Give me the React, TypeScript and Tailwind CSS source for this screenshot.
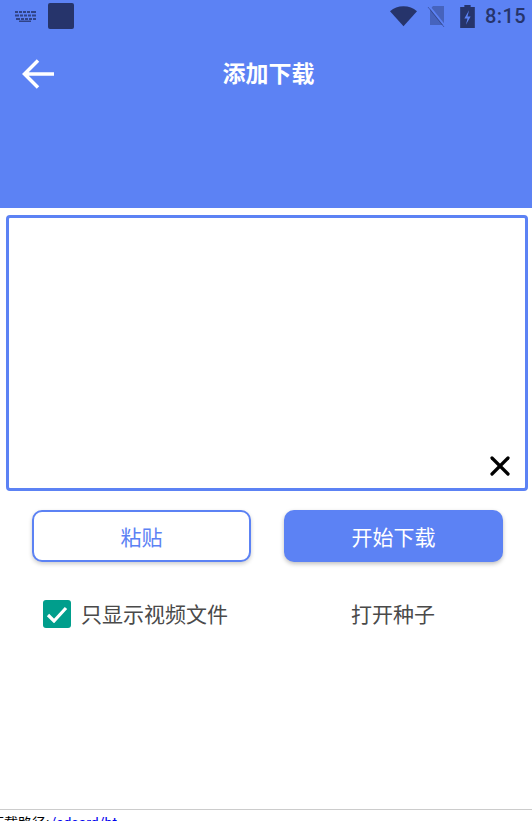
import { X } from "lucide-react";

const cjk = "font-['Roboto','Noto_Sans_CJK_SC',sans-serif]";

function StatusBar() {
  return (
    <div className="flex h-[32px] items-center justify-between pl-[15px] pr-[6px]">
      <div className="flex items-center gap-[12px]">
        <svg width="21" height="11" viewBox="0 0 21 11" fill="#26346b" opacity="0.8">
          <path d="M0 0h3v2H0zM4 0h3v2H4zM8 0h3v2H8zM12 0h3v2h-3zM16 0h5v2h-5zM0 3.500h4v2H0zM5 3.500h3v2H5zM9 3.500h3v2H9zM13 3.500h3v2h-3zM17 3.500h4v2h-4zM1 7h4v2H1zM6 7h3v2H6zM10 7h3v2h-3zM14 7h3v2h-3zM18 7h3v2h-3zM4 9.500h12V11H4z" />
        </svg>
        <div className="h-[26px] w-[26px] rounded-[2px] bg-[#26346b]" />
      </div>
      <div className="flex items-center">
        <svg width="27" height="22" viewBox="0 0 28 22" fill="#26346b">
          <path d="M0 6C4 2.500 8.500 1 14 1s10 1.500 14 5L14 21.500z" />
        </svg>
        <svg className="ml-[10px]" width="20" height="22" viewBox="0 0 20 22" fill="none">
          <path d="M6 1h11v19H3V4.500z" fill="#26346b" opacity="0.4" />
          <path d="M2 1l16 20" stroke="#5c82f4" strokeWidth="2" />
          <path d="M1 2l16 20" stroke="#26346b" strokeWidth="1" opacity="0.5" />
        </svg>
        <svg className="ml-[13px]" width="15" height="23" viewBox="0 0 14 22" fill="#26346b">
          <path fillRule="evenodd" d="M4 0h6v2h4v20H0V2h4zM8.500 5L4 13h3l-1.500 6L10 11H7z" />
        </svg>
        <span className={`ml-[10px] text-[20px] font-medium leading-none tracking-[0.4px] text-[#26346b] ${cjk}`}>8:15</span>
      </div>
    </div>
  );
}

export default function App() {
  return (
    <div className={`flex h-[821px] w-[532px] flex-col overflow-hidden bg-white ${cjk}`}>
      <div className="h-[208px] shrink-0 bg-[#5c82f4]">
        <StatusBar />
        <div className="relative mt-[12px] flex h-[60px] items-center justify-center">
          <svg className="absolute left-[22px] top-[15px]" width="32" height="30" viewBox="0 0 32 30" fill="none">
            <path d="M32 15H3M16 1.500L2.500 15 16 28.500" stroke="white" strokeWidth="3.500" />
          </svg>
          <h1 className="mr-[-5px] pt-[2px] text-[23px] font-bold text-white">添加下载</h1>
        </div>
      </div>

      <div className="relative ml-[6px] mr-[4px] mt-[7px] h-[276px] shrink-0 rounded-[4px] border-[3px] border-[#5c82f4]">
        <X className="absolute bottom-[6px] right-[9px]" size={32} color="black" strokeWidth={2.4} />
      </div>

      <div className="mt-[19px] flex h-[52px] shrink-0 pl-[32px]">
        <button className="w-[219px] rounded-[10px] border-2 border-[#5c82f4] bg-white pt-[5px] text-[21px] text-[#5c82f4] shadow-[0_2px_4px_rgba(0,0,0,0.2)]">粘贴</button>
        <button className="ml-[33px] w-[219px] rounded-[10px] bg-[#5c82f4] pt-[5px] text-[21px] text-white shadow-[0_2px_4px_rgba(0,0,0,0.25)]">开始下载</button>
      </div>

      <div className="mt-[38px] flex h-[28px] shrink-0 items-center text-[21px] text-[#4a4a4a]">
        <div className="ml-[43px] flex h-[28px] w-[28px] items-center justify-center rounded-[3px] bg-[#009e8c]">
          <svg width="22" height="17" viewBox="0 0 22 17" fill="none">
            <path d="M2 9l6 6L20 2" stroke="white" strokeWidth="3.200" />
          </svg>
        </div>
        <span className="ml-[10px] w-[147px] whitespace-nowrap pt-[3px]">只显示视频文件</span>
        <span className="ml-[123px] whitespace-nowrap pt-[3px]">打开种子</span>
      </div>

      <div className="mt-[181px] flex shrink-0 whitespace-nowrap border-t border-[#cccccc] pt-[4px] text-[14px] leading-[18px] text-black">
        <span className="-ml-[10px]">下载路径:</span>
        <span className="ml-[1px] text-[#0000ee]">/sdcard/bt</span>
      </div>
    </div>
  );
}
